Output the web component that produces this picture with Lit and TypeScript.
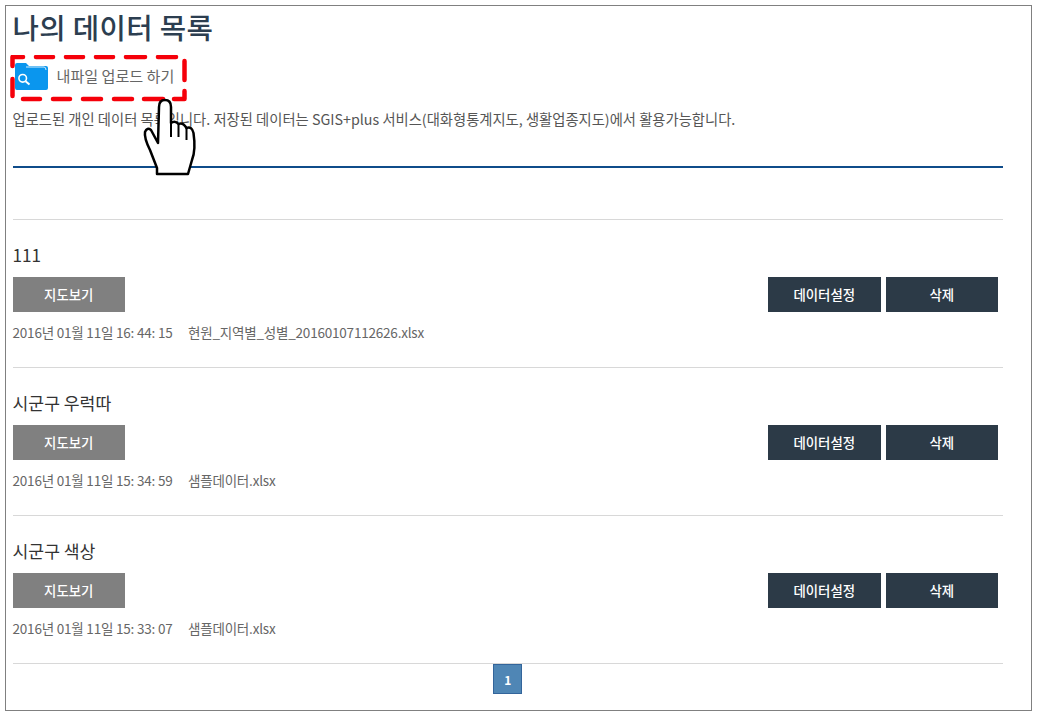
import { LitElement, html, css } from "lit";
import { customElement } from "lit/decorators.js";

const rows = [
  { title: "111", date: "2016년 01월 11일 16: 44: 15", file: "현원_지역별_성별_20160107112626.xlsx" },
  { title: "시군구 우럭따", date: "2016년 01월 11일 15: 34: 59", file: "샘플데이터.xlsx" },
  { title: "시군구 색상", date: "2016년 01월 11일 15: 33: 07", file: "샘플데이터.xlsx" },
];

@customElement("app-root")
export class AppRoot extends LitElement {
  static styles = css`
    :host {
      display: block;
      width: 1039px;
      height: 715px;
      background: #fff;
      font-family: "Noto Sans CJK KR", "Noto Sans", sans-serif;
      overflow: hidden;
    }
    .frame {
      position: relative;
      box-sizing: border-box;
      margin: 5px 7px 0 5px;
      width: 1027px;
      height: 705.5px;
      border: 1.5px solid #808080;
      padding: 0 28px 0 6.5px;
    }
    h1 {
      margin: 0;
      height: 45px;
      font-size: 28.7px;
      line-height: 42px;
      font-weight: 500;
      color: #2c3e50;
      letter-spacing: 0.35px;
    }
    .upload {
      display: flex;
      align-items: center;
      gap: 9px;
      height: 50px;
      padding-left: 2px;
      box-sizing: border-box;
      font-size: 15.1px;
      color: #666;
    }
    .upload span { margin-bottom: 1.5px; }
    .intro {
      margin: 0;
      height: 65px;
      font-size: 14.3px;
      line-height: 36px;
      color: #555;
      border-bottom: 2px solid #0f4c8a;
    }
    .spacer { height: 51px; }
    .row {
      border-top: 1px solid #d8d8d8;
      height: 147px;
    }
    .title {
      height: 57px;
      padding-top: 19.5px;
      box-sizing: border-box;
      font-size: 17.2px;
      line-height: 30px;
      color: #333;
    }
    .actions {
      display: flex;
      justify-content: space-between;
      padding-right: 5px;
    }
    .right { display: flex; gap: 5px; }
    .btn {
      width: 112.5px;
      height: 35px;
      padding-bottom: 1px;
      box-sizing: border-box;
      display: flex;
      align-items: center;
      justify-content: center;
      color: #fff;
      font-size: 13.4px;
      font-weight: 500;
    }
    .gray { background: #808080; }
    .dark { background: #2c3a47; }
    .meta {
      display: flex;
      gap: 15.5px;
      margin-top: 9.5px;
      font-size: 13.5px;
      line-height: 20px;
      color: #666;
      letter-spacing: -0.2px;
    }
    .pager {
      border-top: 1px solid #d8d8d8;
      display: flex;
      justify-content: center;
    }
    .page {
      width: 29px;
      height: 30px;
      box-sizing: border-box;
      background: #4f86b5;
      border: 1px solid #33659b;
      color: #fff;
      font-size: 12px;
      font-weight: 700;
      display: flex;
      align-items: center;
      justify-content: center;
    }
    .dash {
      position: absolute;
      left: 3.5px;
      top: 48.5px;
      width: 180px;
      height: 50px;
    }
    .hand {
      position: absolute;
      left: 133.5px;
      top: 88.5px;
      width: 60px;
      height: 85px;
    }
  `;

  render() {
    return html`
      <div class="frame">
        <h1>나의 데이터 목록</h1>
        <div class="upload">
          <svg width="33" height="27" viewBox="0 0 33 27">
            <path d="M0 2Q0 0 2 0H11L14 3H31Q33 3 33 5V25Q33 27 31 27H2Q0 27 0 25Z" fill="#0a96ee"/>
            <path d="M11 4H29Q31 4 31 7" fill="none" stroke="#d5edfc" stroke-width="1"/>
            <circle cx="7.700" cy="15.300" r="3.800" fill="none" stroke="#fff" stroke-width="1.600"/>
            <path d="M10.500 18.200L14.500 21.500" stroke="#fff" stroke-width="2"/>
          </svg>
          <span>내파일 업로드 하기</span>
        </div>
        <p class="intro">업로드된 개인 데이터 목록입니다. 저장된 데이터는 SGIS+plus 서비스(대화형통계지도, 생활업종지도)에서 활용가능합니다.</p>
        <div class="spacer"></div>
        ${rows.map(
          (r) => html`
            <div class="row">
              <div class="title">${r.title}</div>
              <div class="actions">
                <div class="btn gray">지도보기</div>
                <div class="right">
                  <div class="btn dark">데이터설정</div>
                  <div class="btn dark">삭제</div>
                </div>
              </div>
              <div class="meta"><span>${r.date}</span><span>${r.file}</span></div>
            </div>
          `
        )}
        <div class="pager"><div class="page">1</div></div>

        <svg class="dash" viewBox="10 55 180 50" fill="none" stroke="#f5000a" stroke-width="4.500" stroke-linejoin="round" stroke-linecap="round">
          <path d="M12.500 66V57H23M36 57H53M66 57H83M96 57H113M126 57H145M158 57H176"/>
          <path d="M184.500 61V80M184.500 91V99H174"/>
          <path d="M12.500 79V96M23 99H40M53 99H70M83 99H101M114 99H132M144 99H163"/>
        </svg>
        <svg class="hand" viewBox="140 95 60 85">
          <path d="M158 143L159 107Q159 100 165 100Q171 100 171 107V123Q175 120 178.500 124Q183 122 186.500 128Q192 126 193.500 133Q196 150 192 160L188 174H157V168L150 150Q144 138 145 132Q147 127 151 130Z"
            fill="#fff" stroke="#000" stroke-width="2.500" stroke-linejoin="round"/>
          <path d="M171 123V137M178.500 124V137M186.500 128V140" fill="none" stroke="#000" stroke-width="2"/>
        </svg>
      </div>
    `;
  }
}
